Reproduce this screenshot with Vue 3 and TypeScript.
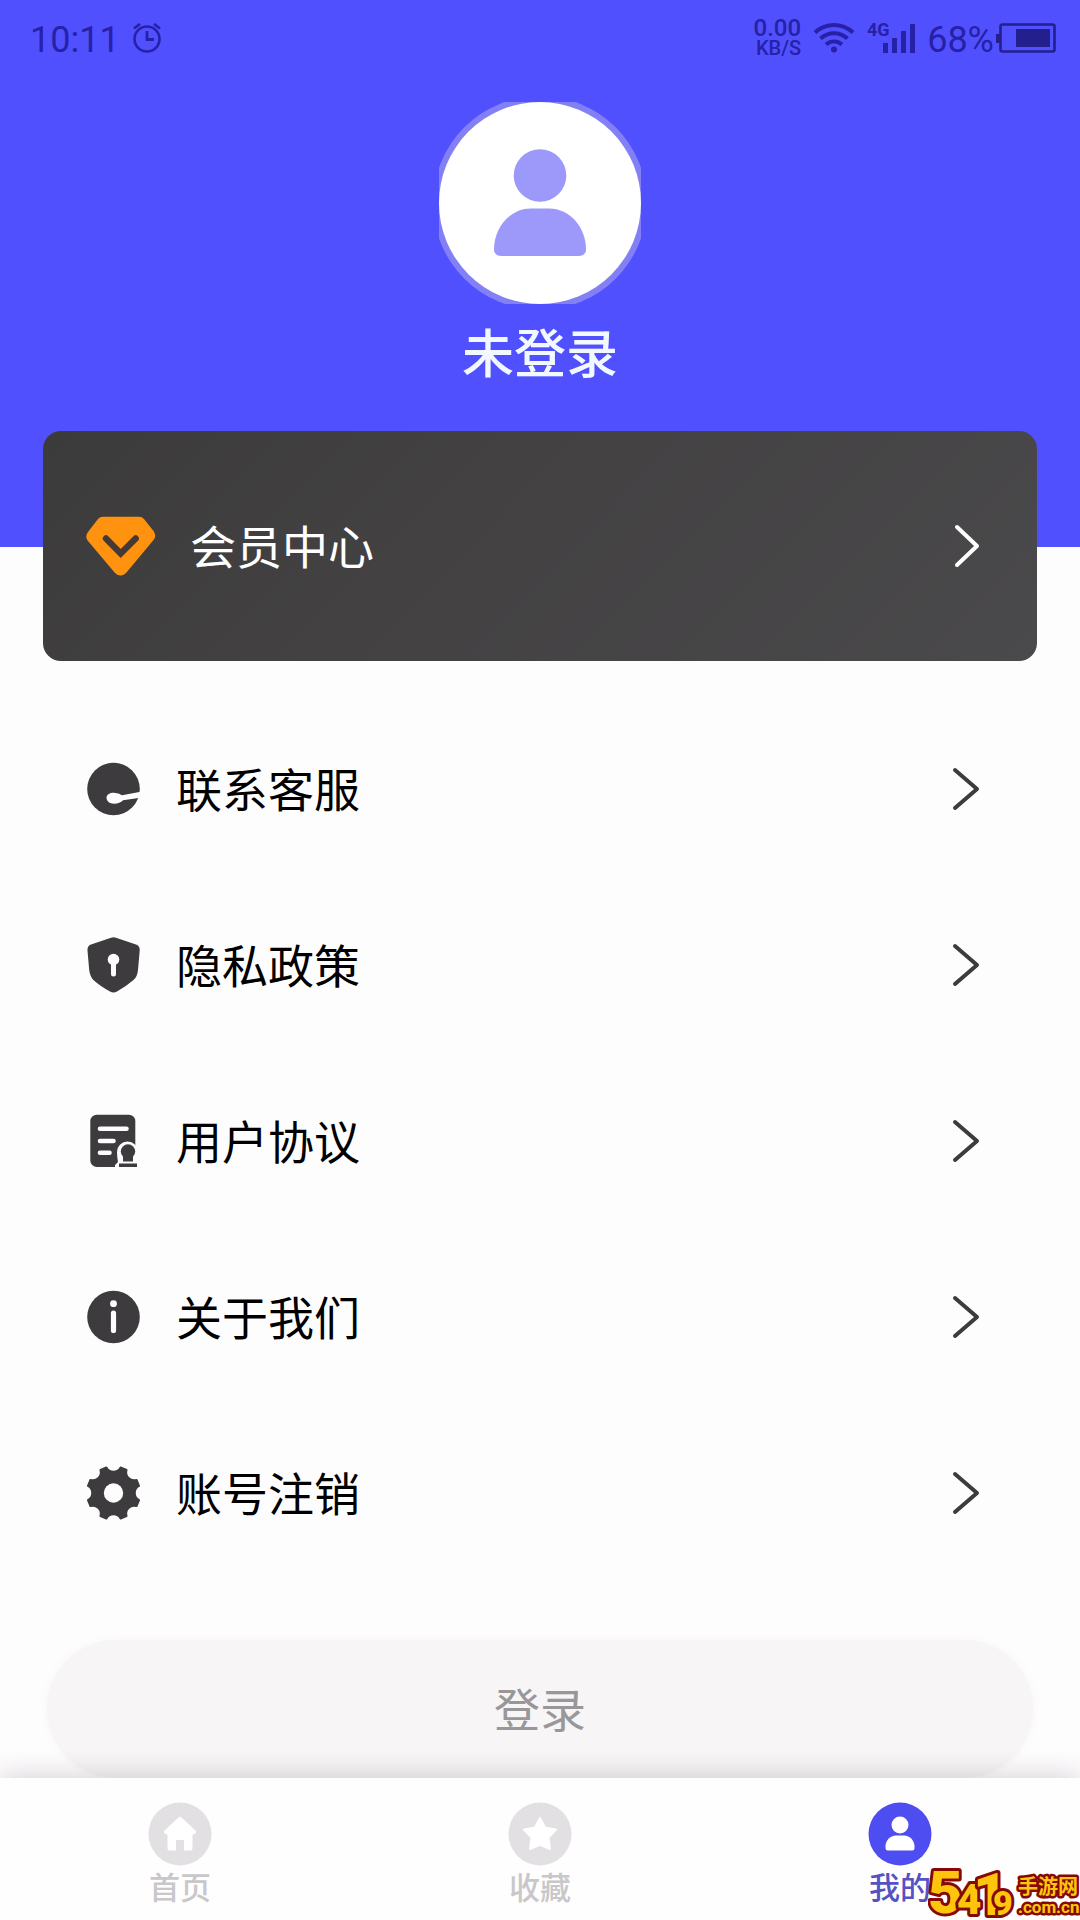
<script setup lang="ts">
import { ref } from 'vue'

type MenuIcon = 'service' | 'privacy' | 'agreement' | 'about' | 'gear'
type TabIcon = 'home' | 'star' | 'user'

const menu: { label: string; icon: MenuIcon }[] = [
  { label: '联系客服', icon: 'service' },
  { label: '隐私政策', icon: 'privacy' },
  { label: '用户协议', icon: 'agreement' },
  { label: '关于我们', icon: 'about' },
  { label: '账号注销', icon: 'gear' },
]

const tabs: { label: string; icon: TabIcon }[] = [
  { label: '首页', icon: 'home' },
  { label: '收藏', icon: 'star' },
  { label: '我的', icon: 'user' },
]

const activeTab = ref<TabIcon>('user')

// Eight teeth joined by rounded notches.
function gearPath(cx: number, cy: number, r: number): string {
  const point = (deg: number) => {
    const a = (deg * Math.PI) / 180
    return `${(cx + r * Math.cos(a)).toFixed(2)} ${(cy + r * Math.sin(a)).toFixed(2)}`
  }
  let d = ''
  for (let i = 0; i < 8; i++) {
    const mid = 22.5 + i * 45
    d += i === 0 ? `M${point(mid - 7)}` : `A8 8 0 0 0 ${point(mid - 7)}`
    d += `L${point(mid + 7)}`
  }
  return `${d}A8 8 0 0 0 ${point(15.5)}Z`
}

const gear = gearPath(27.5, 28, 26.5)
</script>

<template>
  <div class="page">
    <header class="hero">
      <div class="status">
        <div class="status-group">
          <span class="clock">10:11</span>
          <svg class="alarm" width="30" height="30" viewBox="0 0 30 30" fill="none" stroke="currentColor">
            <circle cx="15" cy="16" r="12.5" stroke-width="2.6" />
            <path d="M15 8v8.5h7" stroke-width="2.8" />
            <path d="M2 5.500l6-4.500M28 5.500L22 1" stroke-width="2.8" />
          </svg>
        </div>
        <div class="status-group">
          <div class="speed">
            <span class="rate">0.00</span>
            <span class="unit">KB/S</span>
          </div>
          <svg class="wifi" width="42" height="30" viewBox="0 0 42 30" fill="none" stroke="currentColor" stroke-width="4">
            <path d="M2 9.500C13-.5 29-.5 40 9.500" />
            <path d="M7.500 15.500c8-7 19-7 27 0" />
            <path d="M13 21.500c5-4 11-4 16 0" />
            <circle cx="21" cy="26.500" r="3" fill="currentColor" stroke="none" />
          </svg>
          <svg class="signal" width="50" height="32" viewBox="0 0 50 32" fill="currentColor">
            <text x="0" y="14" class="network">4G</text>
            <path d="M16 21h5v10h-5zM25 16h5v15h-5zM34 9h5v22h-5zM43 2h5v29h-5z" />
          </svg>
          <span class="percent">68%</span>
          <svg class="battery" width="60" height="30" viewBox="0 0 60 30">
            <rect x="4.500" y="1.500" width="54" height="27" rx="2" fill="none" stroke="currentColor" stroke-width="2.600" />
            <path d="M0 11h4v9H0z" fill="currentColor" />
            <path d="M20 6h34v18H20z" fill="currentColor" />
          </svg>
        </div>
      </div>
      <svg class="avatar" width="202" height="202" viewBox="0 0 202 202" role="img" aria-label="头像">
        <circle cx="101" cy="101" r="107" fill="#8280f4" />
        <circle cx="101" cy="101" r="101" fill="#fff" />
        <circle cx="101" cy="73.500" r="26.300" fill="#9c99fb" />
        <path d="M92 106.500h18c21 0 37 19 37 41 0 4-3 6.500-7 6.500H62c-4 0-7-2.500-7-6.500 0-22 16-41 37-41z" fill="#9c99fb" />
      </svg>
      <h1 class="name">未登录</h1>
    </header>

    <main class="content">
      <a class="member" href="#member">
        <svg class="diamond" width="70" height="60" viewBox="0 0 70 60">
          <path d="M17 .7h36q3 0 5 2.300l9.500 12q3.500 5 0 9L40 57q-5.500 5-11 0L2 25q-3.500-4.500 0-9L12 3q2-2.300 5-2.300z" fill="#ff930f" />
          <path d="M20 22.500l14.700 15 15-15" fill="none" stroke="#433a38" stroke-width="6.400" stroke-linecap="round" />
        </svg>
        <span class="label">会员中心</span>
        <svg class="arrow" width="28" height="44" viewBox="0 0 28 44" fill="none" stroke="currentColor" stroke-width="4" stroke-linecap="round" stroke-linejoin="round">
          <path d="M5 3l20 19L5 41" />
        </svg>
      </a>

      <nav class="menu" aria-label="设置">
        <a v-for="item in menu" :key="item.icon" class="row" :href="'#' + item.icon">
          <svg class="icon" width="56" height="56" viewBox="0 0 56 56" fill="#3d3b3d">
            <template v-if="item.icon === 'service'">
              <circle cx="27.500" cy="28" r="26.300" />
              <path d="M56 30.500L36 34.300q-3-2.500-8-2.500c-4.500 0-7.500 2-7.500 5s3 6 7.500 6c4 0 7-1.500 9-3.500l19-2.800z" fill="#fefdfe" />
            </template>
            <template v-else-if="item.icon === 'privacy'">
              <path d="M25 .8q2.500-1 5 0l20 6.700q4 1.500 3.700 6L52 33q-.7 7-4.500 10-7 6-16.500 11.500-3.500 2-7 0Q14 49 8 43.500 4 40 3.200 33L1.500 13.500q-.4-4.500 3.500-6z" />
              <circle cx="27.500" cy="22.500" r="5.800" fill="#fefdfe" />
              <path d="M27.500 24v13" stroke="#fefdfe" stroke-width="5" stroke-linecap="round" />
            </template>
            <template v-else-if="item.icon === 'agreement'">
              <rect x="4.300" y="1.700" width="45" height="52.300" rx="6.500" />
              <path d="M14 15.700h26.500M14 28h13.500M14 39.700h9.500" fill="none" stroke="#fefdfe" stroke-width="4.600" stroke-linecap="round" />
              <path d="M29 56v-4l3-3q-1-5-1-10a10.500 10.500 0 0 1 21 0V56z" fill="#fefdfe" />
              <circle cx="42" cy="38.500" r="7.200" />
              <path d="M37 40h10v8.500H37zM33 50.500h18V54H33z" />
            </template>
            <template v-else-if="item.icon === 'about'">
              <circle cx="27.500" cy="28" r="26.300" />
              <circle cx="27.500" cy="14.700" r="3.400" fill="#fefdfe" />
              <path d="M27.500 24v17.500" stroke="#fefdfe" stroke-width="5.200" stroke-linecap="round" />
            </template>
            <template v-else>
              <path :d="gear" stroke="#3d3b3d" stroke-width="2" stroke-linejoin="round" />
              <circle cx="27.500" cy="28" r="9.700" fill="#fefdfe" />
            </template>
          </svg>
          <span class="label">{{ item.label }}</span>
          <svg class="arrow" width="28" height="44" viewBox="0 0 28 44" fill="none" stroke="currentColor" stroke-width="4" stroke-linecap="round" stroke-linejoin="round">
            <path d="M3 3l22 19L3 41" />
          </svg>
        </a>
      </nav>

      <button type="button" class="login">登录</button>
    </main>

    <nav class="tabbar" aria-label="主导航">
      <button
        v-for="tab in tabs"
        :key="tab.icon"
        type="button"
        class="tab"
        :class="{ active: activeTab === tab.icon }"
        @click="activeTab = tab.icon"
      >
        <svg width="64" height="64" viewBox="0 0 64 64" fill="#fff">
          <circle class="disc" cx="32" cy="32" r="31.500" />
          <path
            v-if="tab.icon === 'home'"
            d="M30.500 15.500q1.500-1.500 3 0L47.500 28.500q1.500 2-1 3.500L44.500 33v13q0 2.500-2.500 2.500h-6V38h-8v10.500h-6q-2.500 0-2.500-2.500V33l-2-1q-2.500-1.500-1-3.500z"
          />
          <path
            v-else-if="tab.icon === 'star'"
            d="M32 16l5 9.500 11 2-7.500 8.200L42 47l-10-4.200L22 47l1.500-11.300L16 27.500l11-2z"
            stroke="#fff"
            stroke-width="2"
            stroke-linejoin="round"
          />
          <template v-else>
            <circle cx="32" cy="23" r="8.500" />
            <path d="M28 33.500h8c6 0 10.500 5 10.500 11V46q0 2.500-2.500 2.500H20q-2.500 0-2.500-2.500v-1.500c0-6 4.500-11 10.500-11z" />
          </template>
        </svg>
        <span class="tab-label">{{ tab.label }}</span>
      </button>
      <svg class="watermark" width="152" height="60" viewBox="0 0 152 60" aria-hidden="true">
        <g class="digits">
          <text x="0" y="53" font-size="60">5</text>
          <text x="29" y="54" font-size="42">4</text>
          <text x="45" y="55" font-size="60">1</text>
          <text x="65" y="55" font-size="34">9</text>
        </g>
        <text class="site" x="90" y="34" font-size="20">手游网</text>
        <text class="domain" x="90" y="53" font-size="17">.com.cn</text>
      </svg>
    </nav>
  </div>
</template>

<style>
body {
  background: #fefdfe;
}
</style>

<style scoped>
.page {
  display: flex;
  flex-direction: column;
  min-height: 100vh;
  font-family: Roboto, "Noto Sans CJK SC", sans-serif;
  color: #000;
}

.page * {
  box-sizing: border-box;
}

a {
  color: inherit;
  text-decoration: none;
}

button {
  border: 0;
  padding: 0;
  font-family: inherit;
  cursor: pointer;
}

svg {
  display: block;
  flex: none;
}

.hero {
  display: flex;
  flex-direction: column;
  align-items: center;
  padding-bottom: 163px;
  background: #5150ff;
}

.status {
  display: flex;
  align-items: center;
  justify-content: space-between;
  align-self: stretch;
  height: 76px;
  padding: 0 24px 0 30px;
  color: #2621a6;
}

.status-group {
  display: flex;
  align-items: center;
}

.clock,
.percent {
  padding-top: 4px;
  font-size: 36px;
  line-height: 40px;
}

.alarm {
  margin-left: 12px;
}

.speed {
  display: flex;
  flex-direction: column;
  align-items: flex-end;
  font-weight: 500;
}

.rate {
  font-size: 24px;
  line-height: 20px;
}

.unit {
  font-size: 20px;
  line-height: 20px;
}

.wifi {
  margin-left: 12px;
}

.signal {
  margin-left: 12px;
  overflow: visible;
}

.network {
  font-size: 18px;
  font-weight: 700;
}

.percent {
  margin-left: 10px;
}

.battery {
  margin-left: 2px;
  color: #231f8c;
}

.avatar {
  margin-top: 26px;
}

.name {
  margin: 24px 0 0;
  font-size: 52px;
  font-weight: 500;
  line-height: 56px;
  color: #f2f8ff;
}

.content {
  display: flex;
  flex-direction: column;
  flex: 1;
}

.member {
  display: flex;
  align-items: center;
  gap: 34px;
  height: 230px;
  margin: -116px 43px 0;
  padding: 0 57px 0 43px;
  border-radius: 18px;
  background: linear-gradient(135deg, #3c3b3b, #434142 40%, #4a494b);
  color: #fff;
}

.label {
  flex: 1;
  padding-top: 4px;
  font-size: 46px;
  line-height: 56px;
}

.menu {
  margin-top: 40px;
}

.row {
  display: flex;
  align-items: center;
  gap: 34px;
  height: 176px;
  padding: 0 100px 0 86px;
}

.row .arrow {
  color: #3d3b3d;
}

.login {
  height: 138px;
  margin: 59px 47px 0;
  padding-top: 4px;
  border-radius: 69px;
  background: #f7f5f6;
  box-shadow: 0 0 8px #f7f5f6;
  font-size: 46px;
  line-height: 56px;
  color: #999799;
}

.tabbar {
  position: sticky;
  bottom: 0;
  display: flex;
  height: 142px;
  background: #fefefe;
  box-shadow: 0 -4px 24px rgba(40, 20, 30, 0.16);
}

.tab {
  display: flex;
  flex: 1;
  flex-direction: column;
  align-items: center;
  gap: 6px;
  padding-top: 24px;
  background: none;
  color: #c9c7c9;
}

.disc {
  fill: #e2e0e2;
}

.tab-label {
  font-size: 31px;
  font-weight: 500;
  line-height: 34px;
}

.tab.active {
  color: #5552c4;
}

.active .disc {
  fill: #4e4df2;
}

.watermark {
  position: absolute;
  right: 0;
  bottom: 0;
  overflow: hidden;
  fill: #ffc40c;
  stroke: #850a06;
  stroke-width: 6px;
  stroke-linejoin: round;
  paint-order: stroke;
  font-weight: 900;
}

.site,
.domain {
  stroke-width: 5px;
  font-weight: 700;
}
</style>
